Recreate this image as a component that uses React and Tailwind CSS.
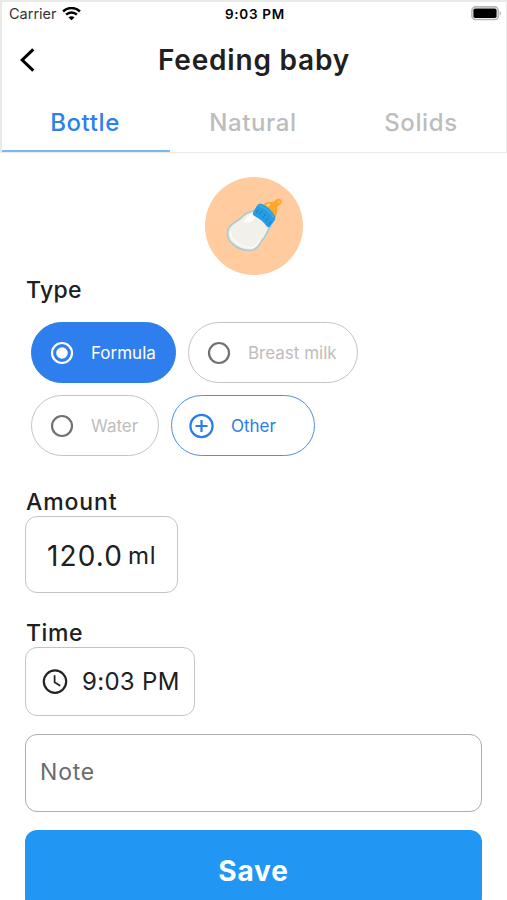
import React, { useState } from 'react';

const tabs = ['Bottle', 'Natural', 'Solids'];

function WifiIcon() {
  return (
    <svg className="w-[19px] h-[15px]" viewBox="0 0 19 15" fill="none">
      <path d="M1.1 4.5a11.9 11.9 0 0 1 16.8 0" stroke="#000" strokeWidth="2.5" />
      <path d="M4.1 7.7a7.6 7.6 0 0 1 10.8 0" stroke="#000" strokeWidth="2.4" />
      <path d="M9.5 13.3 6.5 10.4a4.2 4.2 0 0 1 6 0z" fill="#000" />
    </svg>
  );
}

function BatteryIcon() {
  return (
    <svg className="w-[31px] h-[15px]" viewBox="0 0 31 15" fill="none">
      <rect x="0.9" y="0.9" width="26.4" height="12.6" rx="3.8" stroke="#b5b5b5" strokeWidth="1.6" />
      <rect x="2.4" y="2.4" width="23.2" height="9.6" rx="1.8" fill="#000" />
      <path d="M28.6 4.9c1.8.5 1.8 4.1 0 4.6z" fill="#b5b5b5" />
    </svg>
  );
}

function BottleIcon() {
  return (
    <svg className="w-[98px] h-[98px]" viewBox="0 0 294 294">
      <circle cx="147" cy="147" r="147" fill="#ffcb9f" />
      {/* milk */}
      <path
        d="M147 101 C136 105 124 106 114 117 C106 130 82 134 71 154 C64 174 71 190 83 201 C98 214 119 222 143 219 C159 215 163 202 170 191 C180 183 184 170 196 147 Z"
        fill="#f2f1e9"
        stroke="#aacbd3"
        strokeWidth="5"
        strokeLinejoin="round"
      />
      <path d="M141 111c-12 7-20 12-27 24l22 1c10-4 13-12 19-21z" fill="#fff" />
      <path d="M76 165c1 24 32 47 64 46 13-1 19-10 24-20" fill="none" stroke="#fcfcf8" strokeWidth="4" strokeLinecap="round" />
      {/* nipple */}
      <path
        d="M174 86c4-7 13-12 21-11 8 1 13-1 18-7 4-4 12-4 16 1s1 12-5 15c-6 3-9 7-8 15 1 9-1 17-7 25z"
        fill="#fea629"
      />
      <circle cx="222" cy="75" r="5" fill="#ffb947" />
      <ellipse cx="190" cy="84" rx="6" ry="4" fill="#ffdc93" transform="rotate(-15 190 84)" />
      {/* collar */}
      <path
        d="M156 86c3-6 9-7 15-5 17 8 29 19 39 37 2 5 1 9-2 13l-12 17c-3 5-8 4-11 0-10-15-22-23-37-31-5-3-5-8-3-13z"
        fill="#269ce2"
      />
      <path
        d="M159 98l-4 9M170 103l-6 10M181 112l-7 10M190 123l-7 9M198 134l-7 8"
        stroke="#147fc4"
        strokeWidth="3"
        strokeLinecap="round"
      />
      <path d="M163 86c18 6 33 18 43 35" fill="none" stroke="#38aeed" strokeWidth="5" strokeLinecap="round" />
    </svg>
  );
}

function RadioIcon({ checked }) {
  return (
    <svg className="w-6 h-6 shrink-0" viewBox="0 0 24 24" fill="none">
      <circle cx="12" cy="12" r="10" stroke={checked ? '#fff' : '#717171'} strokeWidth="2.2" />
      {checked && <circle cx="12" cy="12" r="5.8" fill="#fff" />}
    </svg>
  );
}

function PlusIcon() {
  return (
    <svg className="w-[26px] h-[26px] shrink-0" viewBox="0 0 26 26" fill="none" stroke="#2b7de9" strokeWidth="2.2">
      <circle cx="13.5" cy="13" r="11.1" />
      <path d="M13.5 7v12M7.5 13h12" />
    </svg>
  );
}

function ClockIcon() {
  return (
    <svg className="w-[26px] h-[26px] shrink-0" viewBox="0 0 26 26" fill="none" stroke="#222" strokeWidth="2.2">
      <circle cx="13" cy="12.6" r="11.2" />
      <path d="M12.6 6.3v7l5.6 3.4" strokeWidth="1.7" />
    </svg>
  );
}

function Chip({ label, checked, onClick, className }) {
  return (
    <button
      onClick={onClick}
      className={`flex items-center h-[61px] rounded-full border pl-[18px] text-[17px] ${
        checked ? 'bg-[#2e7eed] border-[#2e7eed] text-white' : 'bg-white border-[#c4c4c4] text-[#bdbdbd]'
      } ${className}`}
    >
      <RadioIcon checked={checked} />
      <span className="ml-[17px] pt-0.5 whitespace-nowrap">{label}</span>
    </button>
  );
}

export default function App() {
  const [tab, setTab] = useState('Bottle');
  const [type, setType] = useState('Formula');

  return (
    <div className="w-[507px] h-[900px] overflow-hidden bg-white text-[#202020] font-['Inter',sans-serif]">
      {/* Header */}
      <header className="h-[153px] border-t-2 border-l-2 border-r border-b border-[#e9e9e9] flex flex-col">
        <div className="grid grid-cols-3 items-center h-6 pl-[7px] pr-1 text-black">
          <div className="flex items-center gap-[5px]">
            <span className="text-[14.5px] text-[#333]">Carrier</span>
            <WifiIcon />
          </div>
          <span className="pr-px text-center text-[13.5px] font-semibold tracking-[0.7px]">9:03 PM</span>
          <div className="flex justify-end pb-0.5">
            <BatteryIcon />
          </div>
        </div>

        <div className="grid grid-cols-[60px_1fr_60px] items-center h-[68px]">
          <button className="pl-[17px]" aria-label="Back">
            <svg className="w-4 h-6" viewBox="0 0 16 24" fill="none" stroke="#000" strokeWidth="3">
              <path d="M14.3 1.3 3.2 12l11.1 10.7" />
            </svg>
          </button>
          <h1 className="text-center text-[28px] font-semibold tracking-[0.8px] whitespace-nowrap">Feeding baby</h1>
        </div>

        <nav className="grid grid-cols-3 flex-1">
          {tabs.map((name) => (
            <button
              key={name}
              onClick={() => setTab(name)}
              className={`border-b-2 pt-px pr-0.5 text-2xl font-medium tracking-[0.6px] ${
                tab === name ? 'border-[#7ab8f0] text-[#2f80ed]' : 'border-transparent text-[#bdbdbd]'
              }`}
            >
              {name}
            </button>
          ))}
        </nav>
      </header>

      <main className="px-[25px] pt-6 flex flex-col">
        <div className="flex justify-center">
          <BottleIcon />
        </div>

        <h2 className="h-[30px] leading-[30px] pl-px text-[23px] font-medium tracking-[0.3px]">Type</h2>
        <div className="flex flex-wrap gap-3 mt-[17px] pl-[6px]">
          <Chip label="Formula" className="w-[145px]" checked={type === 'Formula'} onClick={() => setType('Formula')} />
          <Chip label="Breast milk" className="w-[170px]" checked={type === 'Breast milk'} onClick={() => setType('Breast milk')} />
          <Chip label="Water" className="w-[128px]" checked={type === 'Water'} onClick={() => setType('Water')} />
          <button className="flex items-center w-[144px] h-[61px] rounded-full border border-[#4b8ff0] pl-4 text-[17px] text-[#2b7de9]">
            <PlusIcon />
            <span className="ml-[17px] pt-0.5">Other</span>
          </button>
        </div>

        <h2 className="h-[30px] leading-8 mt-[30px] pl-px text-[23px] font-medium tracking-[0.9px]">Amount</h2>
        <div className="flex items-center w-[153px] h-[77px] rounded-xl border border-[#c4c4c4] pt-0.5 pl-[21px]">
          <span className="text-[28px] tracking-[1.1px]">120.0</span>
          <span className="ml-[5px] text-2xl tracking-[0.8px]">ml</span>
        </div>

        <h2 className="h-[30px] leading-8 mt-6 pl-px text-[23px] font-medium tracking-[0.6px]">Time</h2>
        <div className="flex items-center w-[170px] h-[69px] rounded-xl border border-[#c4c4c4] pl-4">
          <ClockIcon />
          <span className="ml-[14px] text-2xl tracking-[0.3px] whitespace-nowrap">9:03 PM</span>
        </div>

        <input
          className="w-full h-[78px] mt-[18px] rounded-xl border border-[#adadad] px-[14px] pb-0.5 text-[23px] tracking-[0.8px] placeholder:text-[#6b6b6b] placeholder:opacity-100"
          placeholder="Note"
        />

        <button className="w-full h-[80px] mt-[18px] rounded-xl bg-[#2196f3] pt-0.5 text-[28px] font-bold tracking-[0.9px] text-white">Save</button>
      </main>
    </div>
  );
}
